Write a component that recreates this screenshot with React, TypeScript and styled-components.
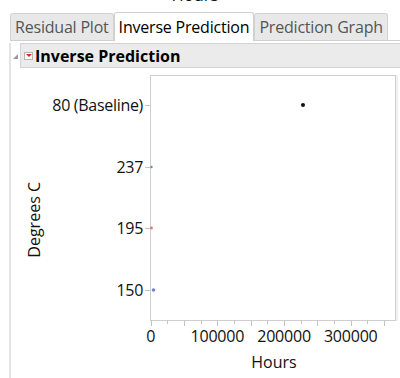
import styled, { createGlobalStyle } from "styled-components";

const GlobalStyle = createGlobalStyle`
  body {
    margin: 0;
    background: #ffffff;
    font-family: "Open Sans", "Noto Sans", sans-serif;
    color: #111;
    overflow: hidden;
  }
`;

const Page = styled.div`
  width: 400px;
  height: 378px;
  overflow: hidden;
`;

const CutTitle = styled.div`
  height: 6px;
  overflow: hidden;
  text-align: center;
  padding-right: 10px;
  span {
    display: block;
    margin-top: -16px;
    font-size: 16.5px;
    line-height: 22px;
  }
`;

const TabBar = styled.div`
  display: flex;
  align-items: flex-end;
  height: 34px;
  margin-left: 10px;
  border-bottom: 1px solid #d0d0d0;
`;

const Tab = styled.div<{ $active?: boolean }>`
  height: ${(p) => (p.$active ? 29 : 27)}px;
  margin-bottom: ${(p) => (p.$active ? -1 : 0)}px;
  padding: 0 4px 1px 4px;
  display: flex;
  align-items: center;
  box-sizing: border-box;
  font-size: 16px;
  letter-spacing: -0.2px;
  color: ${(p) => (p.$active ? "#000" : "#555")};
  background: ${(p) => (p.$active ? "#ffffff" : "#e8e8e8")};
  border: 1px solid ${(p) => (p.$active ? "#cfcfcf" : "#d2d2d2")};
  border-bottom: none;
  border-radius: 3px 3px 0 0;
  white-space: nowrap;
`;

const Panel = styled.div`
  margin-left: 9px;
  border-left: 2px solid #e4e4e4;
  height: 340px;
`;

const OutlineRow = styled.div`
  display: flex;
  align-items: center;
  margin-top: 2px;
  height: 25px;
  padding-left: 2px;
`;

const Disclosure = styled.span`
  width: 0;
  height: 0;
  border-left: 5px solid transparent;
  border-bottom: 5px solid #9a9a9a;
  margin-right: 2px;
  margin-top: 2px;
`;

const HeaderBox = styled.div`
  flex: 1;
  height: 100%;
  box-sizing: border-box;
  display: flex;
  align-items: center;
  gap: 2px;
  padding-left: 3px;
  background: #ebebeb;
  border: 1px solid #d3d3d3;
  border-right: none;
`;

const MenuIcon = styled.span`
  width: 9px;
  height: 8px;
  box-sizing: border-box;
  background: #fff;
  border: 1px solid #b5b5b5;
  display: flex;
  align-items: center;
  justify-content: center;
  &::after {
    content: "";
    border-left: 3px solid transparent;
    border-right: 3px solid transparent;
    border-top: 3px solid #d8282c;
  }
`;

const HeaderTitle = styled.span`
  font-size: 16px;
  font-weight: 700;
  color: #000;
`;

const Chart = styled.div`
  display: grid;
  grid-template-columns: 45px 344px;
  grid-template-rows: 278px auto;
  padding-top: 2px;
`;

const YTitle = styled.div`
  display: flex;
  justify-content: center;
  align-items: flex-start;
  padding-top: 112px;
  span {
    writing-mode: vertical-rl;
    transform: rotate(180deg);
    font-size: 16px;
    white-space: nowrap;
  }
`;

const XTitle = styled.div`
  grid-column: 2;
  padding-left: 92px;
  text-align: center;
  font-size: 16px;
  line-height: 20px;
  margin-top: 4px;
`;

const yTicks = [
  { label: "80 (Baseline)", y: 35 },
  { label: "237", y: 97 },
  { label: "195", y: 158 },
  { label: "150", y: 220 },
];

const points = [
  { x: 247, y: 35, r: 2, c: "#111" },
  { x: 95.5, y: 97, r: 1.2, c: "#4aa08a" },
  { x: 95.5, y: 158, r: 1.4, c: "#e4707a" },
  { x: 97.5, y: 220, r: 1.8, c: "#6d86d4" },
];

const fontStack = '"Open Sans", "Noto Sans", sans-serif';

function Plot() {
  const x0 = 94.7;
  const step = 16.67;
  const xs = Array.from({ length: 15 }, (_, i) => i);
  return (
    <svg width={344} height={278} overflow="visible" style={{ display: "block" }}>
      <rect x={94.5} y={5.5} width={245} height={245} fill="#fff" stroke="#cfcfcf" />
      <line x1={341} y1={5} x2={341} y2={251} stroke="#e2e2e2" />
      {yTicks.map((t) => (
        <g key={t.label}>
          <line x1={89} y1={t.y + 0.5} x2={94} y2={t.y + 0.5} stroke="#c4c4c4" />
          <text
            x={87}
            y={t.y + 6}
            textAnchor="end"
            fontSize={16}
            letterSpacing={-0.3}
            fontFamily={fontStack}
            fill="#111"
          >
            {t.label}
          </text>
        </g>
      ))}
      {xs.map((i) => {
        const x = Math.round(x0 + i * step) + 0.5;
        return (
          <line key={i} x1={x} y1={250} x2={x} y2={i % 2 === 0 ? 256 : 254} stroke="#c4c4c4" />
        );
      })}
      {["0", "100000", "200000", "300000"].map((l, i) => (
        <text
          key={l}
          x={x0 + i * 4 * step}
          y={272}
          textAnchor="middle"
          fontSize={16}
          letterSpacing={-0.2}
          fontFamily={fontStack}
          fill="#111"
        >
          {l}
        </text>
      ))}
      {points.map((p, i) => (
        <circle key={i} cx={p.x} cy={p.y} r={p.r} fill={p.c} />
      ))}
    </svg>
  );
}

export default function App() {
  return (
    <Page>
      <GlobalStyle />
      <CutTitle>
        <span>Hours</span>
      </CutTitle>
      <TabBar>
        <Tab>Residual Plot</Tab>
        <Tab $active>Inverse Prediction</Tab>
        <Tab>Prediction Graph</Tab>
      </TabBar>
      <Panel>
        <OutlineRow>
          <Disclosure />
          <HeaderBox>
            <MenuIcon />
            <HeaderTitle>Inverse Prediction</HeaderTitle>
          </HeaderBox>
        </OutlineRow>
        <Chart>
          <YTitle>
            <span>Degrees C</span>
          </YTitle>
          <Plot />
          <XTitle>Hours</XTitle>
        </Chart>
      </Panel>
    </Page>
  );
}
